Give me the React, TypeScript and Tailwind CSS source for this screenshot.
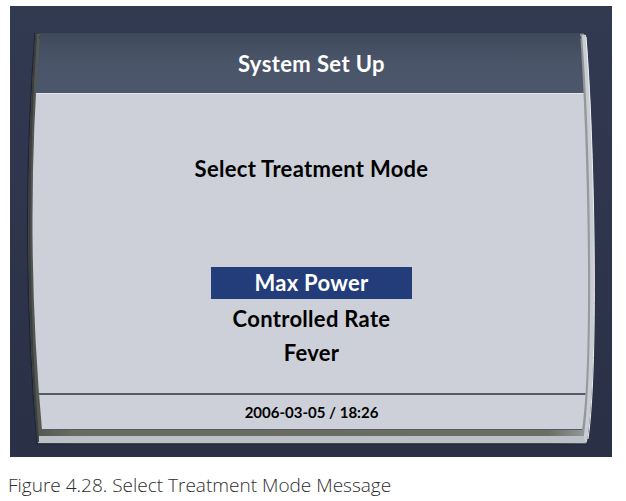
import React from "react";

const ui = { fontFamily: "Lato, 'Open Sans', 'Liberation Sans', sans-serif" };

function Bezel() {
  return (
    <svg
      className="absolute inset-0 pointer-events-none"
      width="569"
      height="412"
      viewBox="0 0 569 412"
    >
      <defs>
        <linearGradient id="bz" x1="0" y1="0" x2="1" y2="0">
          <stop offset="0" stopColor="#4f534f" />
          <stop offset="0.08" stopColor="#696b61" />
          <stop offset="0.92" stopColor="#6c6e64" />
          <stop offset="1" stopColor="#9da1a4" />
        </linearGradient>
      </defs>
      <path
        d="M8,0 L558,0 C566,100 572,330 560,411 L10,411 Q-8,205 8,0 Z"
        fill="url(#bz)"
        stroke="#1e2330"
        strokeWidth="1.2"
      />
      <path
        d="M557,2 C565,100 570,330 558,409"
        fill="none"
        stroke="#c9cdd3"
        strokeWidth="4"
      />
      <path
        d="M559,4 C567,100 572,330 561,406"
        fill="none"
        stroke="#eef0f3"
        strokeWidth="1"
      />
      <path d="M12,403 L557,403 L558,410 L11,410 Z" fill="#bcc0c7" />
      <path d="M9,2 Q-5,205 11,409" fill="none" stroke="#3a3e40" strokeWidth="2" />
      <path d="M12,4.5 L554,4.5" stroke="#2e3236" strokeWidth="1.5" />
    </svg>
  );
}

export default function App() {
  return (
    <div className="w-[626px] h-[501px] bg-white relative" style={ui}>
      <div className="ml-[10px] mt-[6px] w-[602px] h-[451px] bg-gradient-to-b from-[#323a52] to-[#2a3045] pl-[17px] pt-[21px]">
        <div className="relative w-[569px] h-[412px]">
          <Bezel />
          <div className="relative mt-[6px] w-[569px] flex flex-col [clip-path:path('M13,0_L553,0_C560,94_566,324_555,397_L15,397_Q-3,199_13,0_Z')]">
            <div className="h-[61px] border-b border-[#e3e6ea] bg-gradient-to-b from-[#3f495c] via-[#4a5569] to-[#4c576b] flex items-center justify-center">
              <span className="text-white font-bold text-[22px] tracking-[0.4px] leading-none pt-[1px]">
                System Set Up
              </span>
            </div>
            <div className="h-[299px] bg-[#cdd0d8] flex flex-col items-center pt-[60px]">
              <div className="h-[30px] flex items-center text-black font-bold text-[22px] tracking-[0.3px] leading-none">
                Select Treatment Mode
              </div>
              <div className="mt-[83px] w-[201px] h-[32px] bg-[#233c7a] flex items-center justify-center text-white font-bold text-[22px] tracking-[0.3px] leading-none">
                Max Power
              </div>
              <div className="mt-[3px] h-[34px] flex items-center text-black font-bold text-[22px] tracking-[0.3px] leading-none">
                Controlled Rate
              </div>
              <div className="h-[34px] flex items-center text-black font-bold text-[22px] tracking-[0.3px] leading-none">
                Fever
              </div>
            </div>
            <div className="h-[38px] bg-[#cdd0d8] border-t-2 border-b-2 border-[#555a66] flex items-center justify-center">
              <span className="text-black font-bold text-[15px] leading-none">
                2006-03-05 / 18:26
              </span>
            </div>
          </div>
        </div>
      </div>
      <div
        className="mt-[19px] ml-[8px] text-[19px] leading-none text-[#2e2e2e] font-light"
        style={{ fontFamily: "'Open Sans', 'Noto Sans', sans-serif" }}
      >
        Figure 4.28. Select Treatment Mode Message
      </div>
    </div>
  );
}
